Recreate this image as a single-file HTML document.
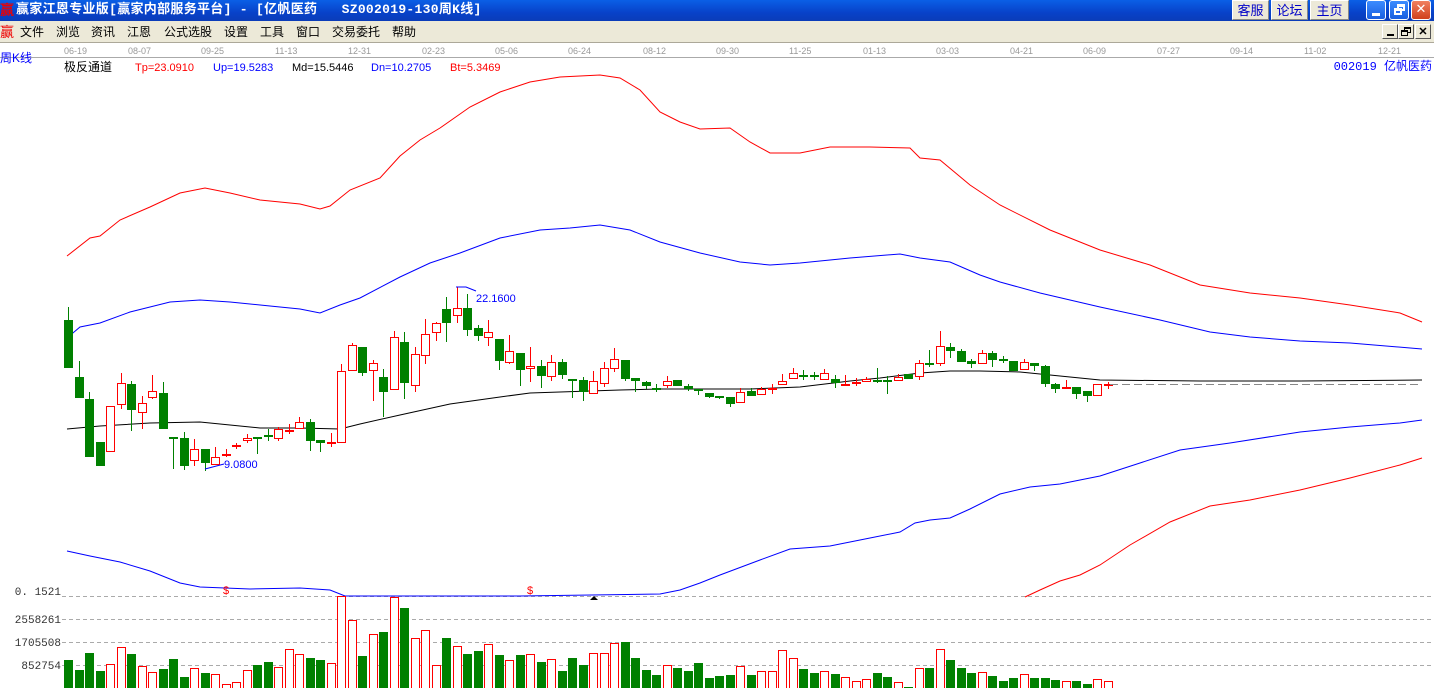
<!DOCTYPE html>
<html><head><meta charset="utf-8">
<style>
*{margin:0;padding:0;box-sizing:border-box}
body{width:1434px;height:688px;overflow:hidden;background:#fff;font-family:"Liberation Sans","Noto Sans CJK SC",sans-serif;position:relative}
#title{position:absolute;left:0;top:0;width:1434px;height:21px;background:linear-gradient(#0a5fe6,#0842c9 60%,#0a3cb8);color:#fff;font-family:"Liberation Mono","Noto Sans CJK SC",monospace;font-weight:bold;font-size:13px;line-height:20px}
#title .t{position:absolute;left:16px;top:0;letter-spacing:0.3px}
.ico{position:absolute;left:0;color:#e00;font-size:14px;font-family:"Noto Sans CJK SC",sans-serif}
.tb{position:absolute;top:0;height:20px;background:#ece9d8;border:1px solid #fff;border-right-color:#888;border-bottom-color:#888;color:#0000c8;font-size:13px;font-weight:normal;text-align:center;line-height:18px;font-family:"Noto Sans CJK SC",sans-serif}
.wb{position:absolute;top:0;width:20px;height:20px;border:1px solid #fff;border-radius:3px;background:linear-gradient(#3c8cff,#1a5fe0)}
#menu{position:absolute;left:0;top:21px;width:1434px;height:22px;background:#ece9d8;font-size:12px;line-height:22px;font-family:"Noto Sans CJK SC",sans-serif;border-bottom:1px solid #aca899}
#menu span{position:absolute;top:0}
.mb{position:absolute;top:3px;width:16px;height:15px;background:#ece9d8;border:1px solid #fff;border-right-color:#555;border-bottom-color:#555}
</style></head><body>
<div id="title"><span class="ico">赢</span><span class="t">赢家江恩专业版[赢家内部服务平台] - [亿帆医药&nbsp;&nbsp;&nbsp;SZ002019-130周K线]</span>
<div class="tb" style="left:1232px;width:37px">客服</div>
<div class="tb" style="left:1271px;width:37px">论坛</div>
<div class="tb" style="left:1310px;width:39px">主页</div>
<div class="wb" style="left:1366px"><div style="position:absolute;left:5px;top:12px;width:8px;height:3px;background:#fff"></div></div>
<div class="wb" style="left:1389px"><div style="position:absolute;left:7px;top:3px;width:8px;height:7px;border:2px solid #fff;border-top-width:3px"></div><div style="position:absolute;left:4px;top:7px;width:8px;height:7px;border:2px solid #fff;border-top-width:3px;background:#2a6ff0"></div></div>
<div class="wb" style="left:1411px;background:linear-gradient(#f08060,#d0401c);color:#fff;font-size:16px;line-height:17px;text-align:center">✕</div>
</div>
<div id="menu">
<span style="left:0;color:#e00;font-size:14px">赢</span>
<span style="left:20px">文件</span><span style="left:56px">浏览</span><span style="left:91px">资讯</span><span style="left:127px">江恩</span><span style="left:164px">公式选股</span><span style="left:224px">设置</span><span style="left:260px">工具</span><span style="left:296px">窗口</span><span style="left:332px">交易委托</span><span style="left:392px">帮助</span>
<div class="mb" style="left:1382px"><div style="position:absolute;left:4px;top:9px;width:7px;height:2px;background:#000"></div></div>
<div class="mb" style="left:1398px"><div style="position:absolute;left:5px;top:2px;width:7px;height:6px;border:1px solid #000;border-top-width:2px"></div><div style="position:absolute;left:2px;top:5px;width:7px;height:6px;border:1px solid #000;border-top-width:2px;background:#ece9d8"></div></div>
<div class="mb" style="left:1415px;font-size:11px;font-weight:bold;line-height:13px;text-align:center">✕</div>
</div>
<svg id="c" width="1434" height="645" style="position:absolute;left:0;top:43px" viewBox="0 43 1434 645" font-family="Liberation Sans, Noto Sans CJK SC, sans-serif">
<line x1="0" y1="57.5" x2="1434" y2="57.5" stroke="#aaa"/>
<g font-size="9" fill="#999" id="dates"></g>
<text x="0" y="62" font-size="12" fill="#00f">周K线</text>
<text x="64" y="71" font-size="12" fill="#000">极反通道</text>
<text x="135" y="71" font-size="11" fill="#f00">Tp=23.0910</text>
<text x="213" y="71" font-size="11" fill="#00f">Up=19.5283</text>
<text x="292" y="71" font-size="11" fill="#000">Md=15.5446</text>
<text x="371" y="71" font-size="11" fill="#00f">Dn=10.2705</text>
<text x="450" y="71" font-size="11" fill="#f00">Bt=5.3469</text>
<text x="1432" y="70" font-size="12" fill="#00f" text-anchor="end" font-family="Liberation Mono, Noto Sans CJK SC, monospace">002019 亿帆医药</text>
<g stroke="#aaa" stroke-dasharray="4,3"><line x1="62" y1="596.5" x2="1434" y2="596.5"/><line x1="62" y1="619.5" x2="1434" y2="619.5"/><line x1="62" y1="642.5" x2="1434" y2="642.5"/><line x1="62" y1="665.5" x2="1434" y2="665.5"/></g>
<g font-size="11" fill="#333" text-anchor="end" font-family="Liberation Mono, monospace"><text x="61" y="595">0. 1521</text><text x="61" y="623">2558261</text><text x="61" y="646">1705508</text><text x="61" y="669">852754</text></g>
<g id="lines" fill="none" stroke-width="1"></g>
<g id="cand"></g>
<g id="vol"></g>
<polyline points="205,469 224,464" stroke="#00f" fill="none"/>
<text x="224" y="468" font-size="11" fill="#00f">9.0800</text>
<polyline points="456,287 466,287 476,291" stroke="#00f" fill="none"/>
<text x="476" y="302" font-size="11" fill="#00f">22.1600</text>
<text x="223" y="594" font-size="11" fill="#f00">$</text>
<text x="527" y="594" font-size="11" fill="#f00">$</text>
<polygon points="590,600 594,596 598,600" fill="#000"/>
<line x1="1110" y1="384.5" x2="1422" y2="384.5" stroke="#888" stroke-dasharray="8,4"/>
</svg>
<script>
var NS="http://www.w3.org/2000/svg";
function el(p,t,a){var e=document.createElementNS(NS,t);for(var k in a)e.setAttribute(k,a[k]);p.appendChild(e);return e;}
var dates=[[64,"06-19"],[128,"08-07"],[201,"09-25"],[275,"11-13"],[348,"12-31"],[422,"02-23"],[495,"05-06"],[568,"06-24"],[643,"08-12"],[716,"09-30"],[789,"11-25"],[863,"01-13"],[936,"03-03"],[1010,"04-21"],[1083,"06-09"],[1157,"07-27"],[1230,"09-14"],[1304,"11-02"],[1378,"12-21"]];
var dg=document.getElementById("dates");dates.forEach(function(d){var t=el(dg,"text",{x:d[0],y:54});t.textContent=d[1];});
var L=document.getElementById("lines");
function pl(pts,col){el(L,"polyline",{points:pts,stroke:col});}
pl("67,256 90,238 100,236 120,220 150,207 180,193 205,188 230,193 260,200 300,204 320,209 330,206 350,190 380,178 400,156 420,140 440,128 470,107 500,92 530,82 560,77 600,75 620,78 640,90 660,112 680,122 700,129 730,128 750,142 770,153 800,153 830,147 870,147 910,148 920,158 940,160 970,185 1000,205 1050,230 1100,250 1150,265 1200,285 1250,293 1300,298 1350,305 1400,313 1422,322","#f00");
pl("67,338 80,327 100,323 130,312 170,302 200,300 230,302 270,306 300,309 320,313 340,305 360,298 400,277 430,263 460,253 500,238 540,230 570,228 600,225 630,230 660,242 700,253 740,262 770,265 800,263 850,258 900,254 920,258 950,262 980,275 1000,282 1040,293 1100,307 1160,320 1210,332 1250,337 1300,341 1350,343 1422,349","#00f");
pl("67,429 100,426 150,423 200,422 260,428 300,428 340,429 360,424 400,415 450,404 500,397 530,393 560,392 620,390 660,389 700,389 750,389 800,387 850,381 880,378 920,373 950,371 980,371 1020,372 1050,375 1100,380 1200,381 1300,381 1422,380","#000");
pl("67,551 90,556 120,562 150,571 180,583 200,587 250,589 300,588 330,590 345,596 520,596 660,594 680,590 700,583 720,575 760,560 790,549 830,546 870,538 900,532 915,523 930,520 950,518 970,509 1000,494 1030,487 1060,484 1100,476 1140,463 1180,450 1230,443 1300,432 1350,427 1400,423 1422,420","#00f");
pl("1025,597 1040,590 1060,581 1080,575 1100,565 1130,545 1170,522 1210,506 1250,500 1300,490 1350,478 1400,465 1422,458","#f00");
// candles: type, bodyTop, bodyBot, hi, lo
var C=[["g",320,368,307,368],["g",377,398,361,398],["g",399,457,392,457],["g",442,466,442,466],["r",406,452,406,452],["r",383,405,373,409],["g",384,410,381,431],["r",403,413,396,429],["r",391,398,375,399],["g",393,429,382,429],
["g",437,438,437,469],["g",438,466,432,470],["r",449,461,439,466],["g",449,463,449,471],["r",457,465,447,465],["r",454,455,449,457],["r",445,446,443,449],["r",438,441,434,443],["g",437,439,437,454],["g",435,437,429,441],
["r",429,439,427,441],["r",430,431,424,434],["r",422,429,417,429],["g",422,441,419,451],["g",440,443,440,452],["r",442,443,433,447],["r",371,443,364,443],["r",345,371,343,371],["g",347,373,347,376],["r",363,371,360,401],
["g",377,392,369,417],["r",337,390,331,390],["g",342,383,332,399],["r",354,386,347,392],["r",334,356,319,364],["r",323,333,322,341],["g",309,323,297,342],["r",308,316,287,323],["g",308,330,294,336],["g",328,336,325,341],
["r",332,338,320,346],["g",339,361,339,370],["r",351,363,335,364],["g",353,370,353,386],["r",366,369,347,382],["g",366,376,360,388],["r",362,377,355,381],["g",362,375,359,379],["g",379,380,379,398],["g",380,392,377,401],
["r",381,394,371,394],["r",368,384,362,387],["r",359,369,348,372],["g",360,379,360,381],["g",378,381,378,392],["g",382,386,381,389],["g",388,389,384,392],["r",381,386,376,388],["g",380,386,380,386],["g",386,389,384,391],
["g",389,390,389,395],["g",393,397,393,398],["g",396,397,396,399],["g",397,404,397,407],["r",392,403,388,403],["g",391,396,388,396],["r",389,395,387,395],["r",388,389,384,394],["r",381,385,374,385],["r",373,379,368,379],
["g",375,376,370,380],["g",375,376,372,380],["r",373,380,369,380],["g",379,383,375,388],["r",384,385,375,385],["r",382,383,378,386],["r",379,382,377,382],["g",380,381,368,383],["g",380,382,376,394],["r",377,381,374,381],
["g",374,379,374,379],["r",363,377,360,380],["g",363,365,350,367],["r",346,364,331,366],["g",347,351,343,358],["g",351,362,349,362],["g",361,364,359,368],["r",353,364,350,364],["g",353,360,351,367],["g",359,360,356,363],
["g",361,371,361,371],["r",362,370,359,370],["g",363,366,363,371],["g",366,384,365,387],["g",384,389,383,393],["r",387,388,380,388],["g",387,394,387,399],["g",391,396,391,402],["r",384,396,384,396],["r",384,385,382,389]];
var V=[660,670,653,671,664,647,654,666,672,669,659,677,668,673,674,684,682,670,665,662,667,649,654,658,660,663,596,620,656,634,632,597,608,638,630,665,638,646,654,651,644,655,660,655,654,662,659,671,658,665,653,653,643,642,658,670,675,665,668,671,663,678,676,675,666,675,671,671,650,658,669,673,671,674,677,681,679,673,677,682,687,668,668,649,660,668,673,672,676,681,678,674,678,678,680,681,681,684,679,681];
var CG=document.getElementById("cand"),VG=document.getElementById("vol");
C.forEach(function(c,i){
 var x=Math.round(68+i*10.505),col=c[0]=="r"?"#f00":"#008000";
 el(CG,"line",{x1:x+0.5,y1:c[3],x2:x+0.5,y2:c[4],stroke:col});
 var h=c[2]-c[1];
 if(h<=1){el(CG,"rect",{x:x-4,y:c[1],width:9,height:2,fill:col});}
 else if(c[0]=="r"){el(CG,"rect",{x:x-3.5,y:c[1]+0.5,width:8,height:h-1,fill:"#fff",stroke:col});}
 else el(CG,"rect",{x:x-4,y:c[1],width:9,height:h,fill:col});
 var v=V[i];
 if(c[0]=="r")el(VG,"rect",{x:x-3.5,y:v+0.5,width:8,height:688-v,fill:"#fff",stroke:col});
 else el(VG,"rect",{x:x-4,y:v,width:9,height:688-v,fill:col});
});
</script>
</body></html>
